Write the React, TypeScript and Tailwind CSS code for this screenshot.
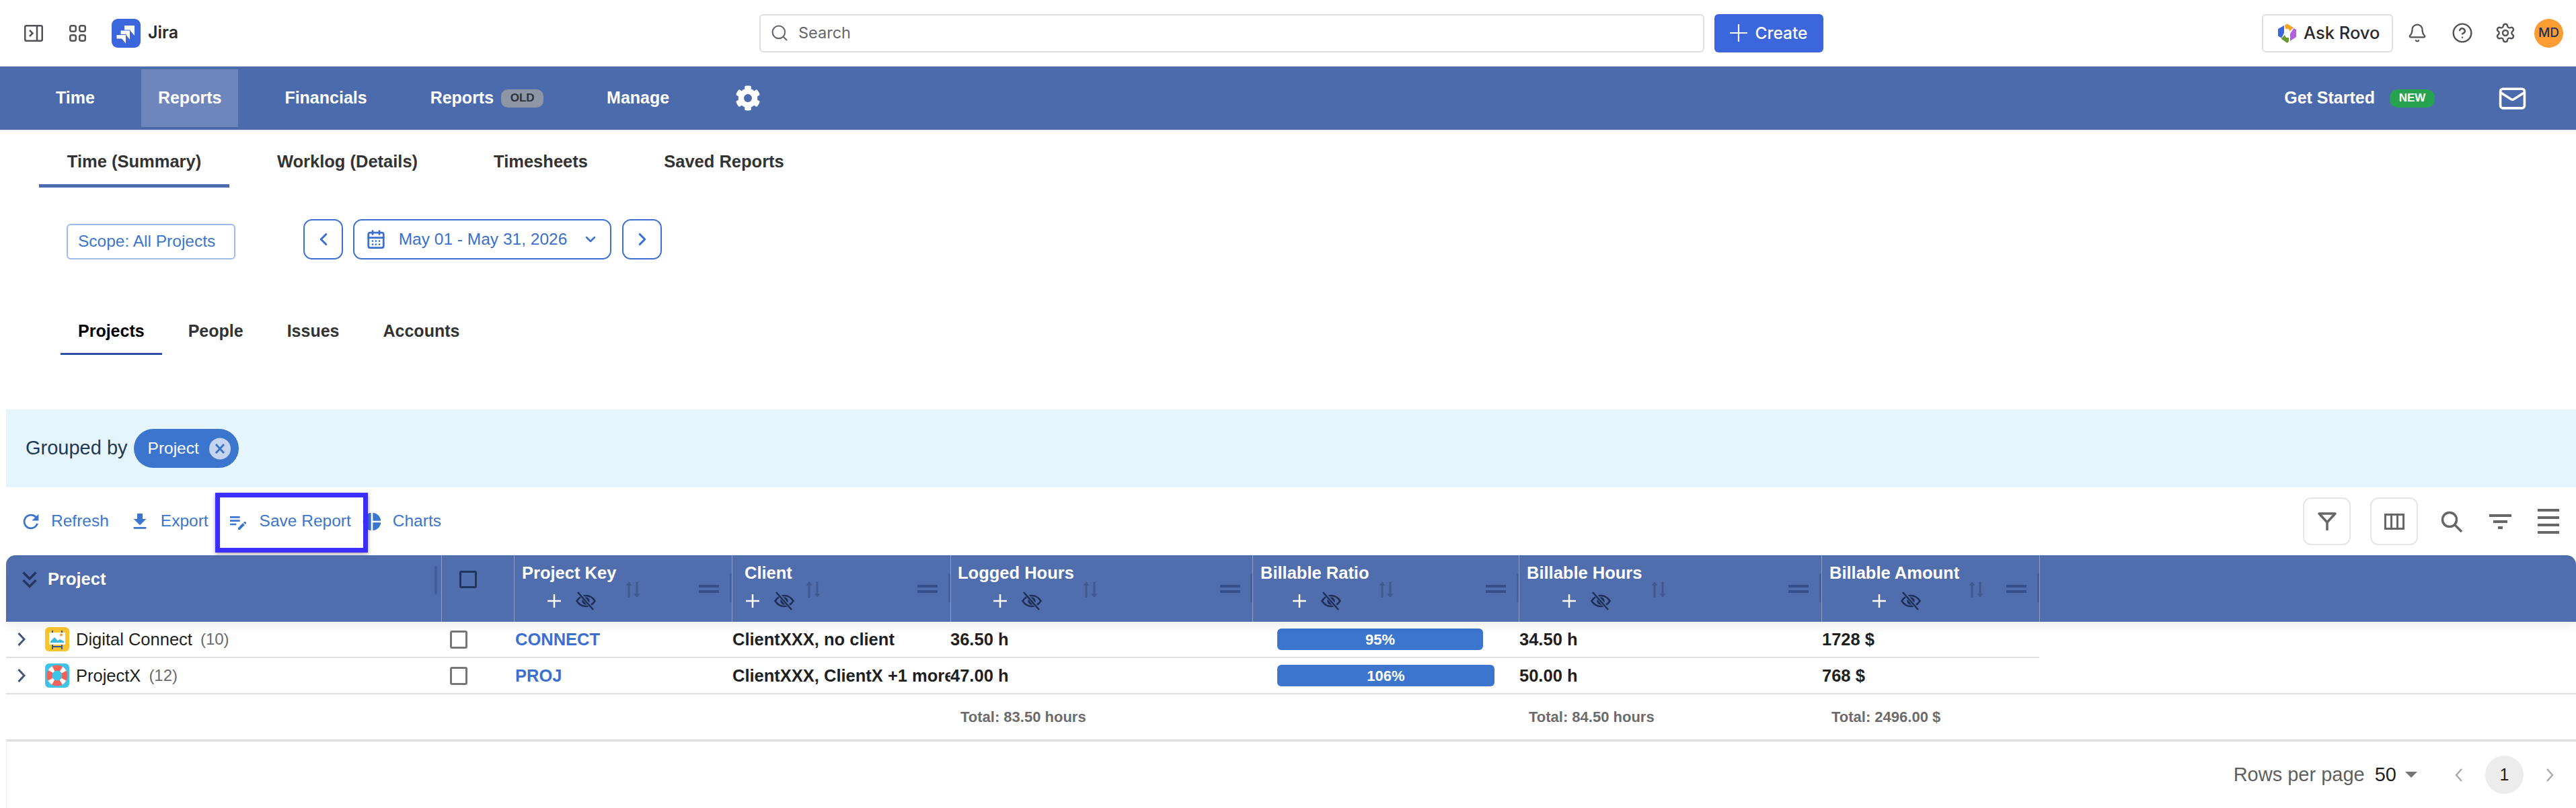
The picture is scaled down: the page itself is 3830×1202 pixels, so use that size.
import type { ReactNode } from "react";
import { Bell, CalendarDays, ChevronDown, ChevronLeft, ChevronRight, CircleHelp, Mail, Search, Settings } from "lucide-react";
import { FaCog } from "react-icons/fa";
import { MdEditNote, MdFileDownload, MdPieChart, MdRefresh } from "react-icons/md";

const navItems = ["Time", "Reports", "Financials"];
const subTabs = [
  { label: "Time (Summary)", width: "w-[283px]" },
  { label: "Worklog (Details)", width: "w-[293px]" },
  { label: "Timesheets", width: "w-[224px]" },
  { label: "Saved Reports", width: "w-[263px]" },
];
const viewTabs = ["Projects", "People", "Issues", "Accounts"];

const toolbarItems = [
  { label: "Refresh", icon: <MdRefresh size={34} />, cls: "gap-[13px]" },
  { label: "Export", icon: <MdFileDownload size={32} />, cls: "gap-[15px] ml-[30px]" },
  { label: "Save Report", icon: <MdEditNote size={32} />, cls: "gap-[16px] ml-[28px]" },
  { label: "Charts", icon: <MdPieChart size={32} />, cls: "gap-[15px] ml-[15px]" },
];

const columns = [
  { title: "Project Key", width: "w-[324px]", pad: "pl-[11px]", left: "w-[154px]", plus: "ml-[38px]", eq: "mr-[19px]" },
  { title: "Client", width: "w-[325px]", pad: "pl-[18px]", left: "w-[91px]", plus: "ml-[2px]", eq: "mr-[19px]" },
  { title: "Logged Hours", width: "w-[449px]", pad: "pl-[10px]", left: "w-[186px]", plus: "ml-[53px]", eq: "mr-[18px]" },
  { title: "Billable Ratio", width: "w-[396px]", pad: "pl-[11px]", left: "w-[176px]", plus: "ml-[48px]", eq: "mr-[19px]" },
  { title: "Billable Hours", width: "w-[450px]", pad: "pl-[11px]", left: "w-[185px]", plus: "ml-[53px]", eq: "mr-[19px]" },
  { title: "Billable Amount", width: "w-[324px]", pad: "pl-[11px]", left: "w-[207px]", plus: "ml-[64px]", eq: "mr-[19px]" },
];

const rows = [
  {
    name: "Digital Connect",
    count: "(10)",
    key: "CONNECT",
    client: "ClientXXX, no client",
    logged: "36.50 h",
    ratio: "95%",
    bar: "w-[306px]",
    hours: "34.50 h",
    amount: "1728 $",
    rowCls: "w-[3023px]",
    icon: <EaselIcon />,
  },
  {
    name: "ProjectX",
    count: "(12)",
    key: "PROJ",
    client: "ClientXXX, ClientX +1 more",
    logged: "47.00 h",
    ratio: "106%",
    bar: "w-[323px]",
    hours: "50.00 h",
    amount: "768 $",
    rowCls: "w-full",
    icon: <BuoyIcon />,
  },
];

function JiraLogo() {
  return (
    <svg width="43" height="43" viewBox="0 0 43 43">
      <rect width="43" height="43" rx="9" fill="#3b66dc" />
      <path d="M19 10h15v15l-6.500-7.500H19z" fill="#fff" />
      <path d="M13 17h14.500v15l-6.500-8h-8z" fill="#fff" stroke="#3b66dc" strokeWidth="1" />
      <path d="M7 23.500h14.500V38l-6.500-8H7z" fill="#fff" stroke="#3b66dc" strokeWidth="1" />
    </svg>
  );
}

function RovoLogo() {
  return (
    <svg width="27" height="29" viewBox="0 0 27 29">
      <path d="M10 2.500 13.500 .5 23 6l-5.500 5.500-2-3.500H11z" fill="#f6a623" />
      <path d="M9 3v11l-4 7.500-5-3V8z" fill="#3b66dc" />
      <path d="M23.500 7 27 9v11l-9 6V15z" fill="#b45fe0" />
      <path d="M4.500 22.500 10 17l2 4h4v5.500L13.500 29z" fill="#6a9a2e" />
    </svg>
  );
}

function EyeOff() {
  return (
    <svg width="30" height="28" viewBox="0 0 30 28" fill="none" stroke="#1f2f55" strokeWidth="2.500">
      <path d="M1.500 14C5 8.500 9.500 6 15 6s10 2.500 13.500 8C25 19.500 20.500 22 15 22S5 19.500 1.500 14z" />
      <circle cx="15" cy="14" r="4.500" fill="#1f2f55" />
      <path d="M4 1l22 26" stroke="#506eae" strokeWidth="5" />
      <path d="M3 1l23 26" />
    </svg>
  );
}

function EaselIcon() {
  return (
    <svg width="36" height="36" viewBox="0 0 36 36">
      <rect width="36" height="36" rx="6" fill="#fbc42c" />
      <path d="M11 5v5M25 5v5M11 24v9M25 24v9M11 29h14" stroke="#2d5a96" strokeWidth="2" />
      <rect x="6" y="8" width="24" height="18" fill="#fff" />
      <circle cx="24" cy="11.500" r="2" fill="#f5962a" />
      <path d="M8 21l6-6 5 5 3-2 6 3z" fill="#3db8d8" />
      <rect x="8" y="21" width="20" height="2" fill="#3db8d8" />
    </svg>
  );
}

function BuoyIcon() {
  return (
    <svg width="36" height="36" viewBox="0 0 36 36" fill="none">
      <rect width="36" height="36" rx="6" fill="#3dc4e8" />
      <circle cx="18" cy="18" r="11.500" stroke="#f2605a" strokeWidth="8" />
      <circle cx="18" cy="18" r="11.500" stroke="#ffffff" strokeWidth="8" strokeDasharray="6 12.060" strokeDashoffset="-6.030" />
    </svg>
  );
}

function PlusMark() {
  return (
    <svg width="20" height="20" viewBox="0 0 20 20" stroke="#fff" strokeWidth="2.500">
      <path d="M10 0v20M0 10h20" />
    </svg>
  );
}

function SortArrows() {
  return (
    <svg width="22" height="24" viewBox="0 0 22 24" fill="#41598f">
      <path d="M5 0 9.500 6H6.500v18h-3V6H.500z" />
      <path d="M15.500 0h3v18h3L17 24l-4.500-6h3z" />
    </svg>
  );
}

function DragLines() {
  return (
    <svg width="30" height="12" viewBox="0 0 30 12" fill="#344f8c">
      <rect width="30" height="4" />
      <rect y="8" width="30" height="4" />
    </svg>
  );
}

function RoundButton({ children, cls }: { children: ReactNode; cls: string }) {
  return (
    <button className={`flex h-[60px] items-center justify-center rounded-[13px] border-2 border-[#3b6fd0] text-[#3b6fd0] ${cls}`}>
      {children}
    </button>
  );
}

function HeaderCell({ col }: { col: (typeof columns)[number] }) {
  return (
    <div className={`relative flex h-full border-l border-[#8ba0cc] ${col.width} ${col.pad}`}>
      <div className={`shrink-0 pt-[11px] ${col.left}`}>
        <div className="whitespace-nowrap text-[25.500px] leading-[30px] font-bold text-white">{col.title}</div>
        <div className={`mt-[13px] flex items-center gap-[22px] ${col.plus}`}>
          <PlusMark />
          <EyeOff />
        </div>
      </div>
      <div className="mt-[39px]">
        <SortArrows />
      </div>
      <div className={`mt-[44px] ml-auto ${col.eq}`}>
        <DragLines />
      </div>
      <div className="absolute top-[27px] right-0 h-[43px] w-[3px] rounded-full bg-[#455f9c]" />
    </div>
  );
}

export default function App() {
  return (
    <div className="h-[1202px] w-[3830px] overflow-hidden bg-white font-['Liberation_Sans',Arial,sans-serif]">
      {/* Top bar */}
      <header className="flex h-[98px] items-center font-['Inter',sans-serif]">
        <div className="flex w-[1129px] shrink-0 items-center pl-[36px]">
          <svg width="28" height="25" viewBox="0 0 28 25" fill="none" stroke="#505258" strokeWidth="2.500">
            <rect x="1.250" y="1.250" width="25.500" height="22.500" rx="2" />
            <path d="M19 1v23M8 8l4.500 4.500L8 17" />
          </svg>
          <svg className="ml-[39px]" width="25" height="25" viewBox="0 0 25 25" fill="none" stroke="#505258" strokeWidth="2.500">
            <rect x="1.250" y="1.250" width="8.500" height="8.500" rx="2.500" />
            <rect x="15.250" y="1.250" width="8.500" height="8.500" rx="2.500" />
            <rect x="1.250" y="15.250" width="8.500" height="8.500" rx="2.500" />
            <rect x="15.250" y="15.250" width="8.500" height="8.500" rx="2.500" />
          </svg>
          <div className="ml-[38px]">
            <JiraLogo />
          </div>
          <span className="ml-[11px] text-[25px] font-semibold text-[#292a2e]">Jira</span>
        </div>
        <div className="flex h-[57px] w-[1405px] shrink-0 items-center rounded-[6px] border-2 border-[#dddee1] pl-[14px] text-[#63666c]">
          <Search size={28} strokeWidth={1.800} />
          <span className="ml-[14px] text-[23.500px]">Search</span>
        </div>
        <button className="ml-[15px] flex h-[57px] w-[162px] shrink-0 items-center justify-center gap-[11px] rounded-[6px] bg-[#3b66dc] text-[24.500px] font-medium text-white">
          <svg width="26" height="26" viewBox="0 0 26 26" stroke="#fff" strokeWidth="2.200">
            <path d="M13 0v26M0 13h26" />
          </svg>
          Create
        </button>
        <div className="ml-auto flex items-center pr-[19px]">
          <button className="flex h-[57px] w-[195px] items-center gap-[11px] rounded-[6px] border-2 border-[#dddee1] pl-[22px] text-[25.500px] font-medium text-[#292a2e]">
            <RovoLogo />
            Ask Rovo
          </button>
          <Bell className="ml-[21px] text-[#505258]" size={30} strokeWidth={1.800} />
          <CircleHelp className="ml-[36px] text-[#505258]" size={32} strokeWidth={1.800} />
          <Settings className="ml-[32px] text-[#505258]" size={32} strokeWidth={1.800} />
          <div className="ml-[27px] flex h-[43px] w-[43px] items-center justify-center rounded-full bg-[#fb9d33] text-[19px] font-medium text-[#1f2f55]">
            MD
          </div>
        </div>
      </header>

      {/* Main nav */}
      <nav className="flex h-[96px] items-center gap-[44px] border-y border-[#e4e4e4] bg-[#4c6bad] pl-[58px] text-[25px] font-bold text-white">
        {navItems.map((item) => (
          <div
            key={item}
            className={`flex h-[86px] items-center px-[25px] ${item === "Reports" ? "bg-[#6f86bd]" : ""}`}
          >
            {item}
          </div>
        ))}
        <div className="flex h-[86px] items-center px-[25px]">
          Reports
          <span className="ml-[11px] flex h-[27px] w-[63px] items-center justify-center rounded-[10px] bg-[#8e96a6] text-[17px] text-[#2a3140]">
            OLD
          </span>
        </div>
        <div className="flex h-[86px] items-center px-[25px]">Manage</div>
        <FaCog className="ml-[29px]" size={38} />
        <div className="ml-auto flex items-center pr-[73px]">
          <span>Get Started</span>
          <span className="ml-[22px] flex h-[27px] w-[67px] items-center justify-center rounded-[12px] bg-[#27a34f] text-[17px]">
            NEW
          </span>
          <Mail className="ml-[94px]" size={43} strokeWidth={2} />
        </div>
      </nav>

      {/* Report type tabs */}
      <div className="flex h-[85px] gap-[29px] pl-[58px] text-[25.500px] font-bold text-[#333333]">
        {subTabs.map((tab, i) => (
          <div
            key={tab.label}
            className={`flex items-center justify-center border-b-[5px] pt-[12px] ${tab.width} ${i === 0 ? "border-[#4c6bad]" : "border-transparent"}`}
          >
            {tab.label}
          </div>
        ))}
      </div>

      {/* Scope and date range */}
      <div className="mt-[47px] flex items-end pl-[99px] text-[24.500px] text-[#3b75ce]">
        <button className="flex h-[53px] w-[251px] items-center rounded-[6px] border-2 border-[#9dbce9] pl-[15px]">
          Scope: All Projects
        </button>
        <RoundButton cls="ml-[101px] w-[59px]">
          <ChevronLeft size={30} strokeWidth={2.500} />
        </RoundButton>
        <RoundButton cls="ml-[15px] w-[384px] gap-[19px]">
          <CalendarDays size={30} strokeWidth={2.200} />
          <span>May 01 - May 31, 2026</span>
          <ChevronDown className="ml-[4px]" size={24} strokeWidth={2.500} />
        </RoundButton>
        <RoundButton cls="ml-[16px] w-[59px]">
          <ChevronRight size={30} strokeWidth={2.500} />
        </RoundButton>
      </div>

      {/* View tabs */}
      <div className="mt-[74px] flex h-[68px] gap-[13px] pl-[90px] text-[25px] font-bold">
        {viewTabs.map((tab, i) => (
          <div
            key={tab}
            className={`flex items-center border-b-[3px] px-[26px] ${i === 0 ? "border-[#2e4fa3] text-black" : "border-transparent text-[#333333]"}`}
          >
            {tab}
          </div>
        ))}
      </div>

      {/* Grouping band */}
      <div className="mt-[81px] ml-[9px] flex h-[116px] items-center bg-[#e5f5fd] pl-[29px]">
        <span className="text-[29px] text-[#1e3a52]">Grouped by</span>
        <div className="ml-[9px] flex h-[58px] w-[156px] items-center rounded-full bg-[#3b75ce] pl-[21px] text-[24.500px] text-white">
          Project
          <svg className="ml-[15px]" width="32" height="33" viewBox="0 0 32 33" stroke="#3b75ce" strokeWidth="3">
            <circle cx="16" cy="16.500" r="16" fill="#c5d5ef" stroke="none" />
            <path d="M10 10l12 13M22 10L10 23" />
          </svg>
        </div>
      </div>

      {/* Toolbar */}
      <div className="relative flex h-[101px] items-center pr-[25px] pl-[29px]">
        {toolbarItems.map((item) => (
          <button key={item.label} className={`flex items-center text-[24.500px] text-[#3b75ce] ${item.cls}`}>
            {item.icon}
            {item.label}
          </button>
        ))}
        <div className="absolute top-[8px] left-[320px] h-[89px] w-[227px] border-[7px] border-[#3a2ffa] shadow-[0_2px_6px_rgba(0,0,0,0.35)]" />
        <button className="ml-auto flex h-[71px] w-[71px] items-center justify-center rounded-[12px] border-2 border-[#e6e6e6]">
          <svg width="28" height="28" viewBox="0 0 28 28" fill="none" stroke="#666666" strokeWidth="3.500" strokeLinejoin="round">
            <path d="M2 2h24L14 15zM14 14v13" />
          </svg>
        </button>
        <button className="ml-[29px] flex h-[71px] w-[71px] items-center justify-center rounded-[12px] border-2 border-[#e6e6e6]">
          <svg width="30" height="24" viewBox="0 0 30 24" fill="none" stroke="#666666" strokeWidth="3">
            <rect x="1.500" y="1.500" width="27" height="21" />
            <path d="M10.500 1v22M19.500 1v22" />
          </svg>
        </button>
        <svg className="ml-[34px]" width="32" height="32" viewBox="0 0 32 32" fill="none" stroke="#666666" strokeWidth="3.500">
          <circle cx="13" cy="13" r="10.500" />
          <path d="M20.500 20.500 31 31" />
        </svg>
        <svg className="ml-[40px]" width="33" height="22" viewBox="0 0 33 22" fill="#666666">
          <rect width="33" height="4" />
          <rect x="6" y="9" width="21" height="4" />
          <rect x="13" y="18" width="7" height="4" />
        </svg>
        <svg className="ml-[39px]" width="32" height="37" viewBox="0 0 32 37" fill="#666666">
          <rect width="32" height="4" />
          <rect y="11" width="32" height="4" />
          <rect y="22" width="32" height="4" />
          <rect y="33" width="32" height="4" />
        </svg>
      </div>

      {/* Table */}
      <div className="ml-[9px]">
        <div className="relative z-10 flex h-[99px] rounded-t-[14px] bg-[#506eae] shadow-[0_8px_14px_rgba(0,0,0,0.06)]">
          <div className="relative flex h-full w-[647px] items-start pt-[24px] pl-[24px]">
            <svg width="22" height="25" viewBox="0 0 22 25" fill="none" stroke="#24365f" strokeWidth="3.500">
              <path d="M1.500 1.500 11 11l9.500-9.500M1.500 13 11 22.500 20.500 13" />
            </svg>
            <span className="ml-[16px] text-[25.500px] leading-[22px] font-bold text-white">Project</span>
            <div className="absolute top-[15px] right-[6px] h-[43px] w-[4px] rounded-full bg-[#455f9c]" />
          </div>
          <div className="h-full w-[108px] border-l border-[#8ba0cc] pt-[23px] pl-[26px]">
            <div className="h-[26px] w-[26px] rounded-[3px] border-[3px] border-[#1f3560]" />
          </div>
          {columns.map((col) => (
            <HeaderCell key={col.title} col={col} />
          ))}
          <div className="h-full flex-1 border-l border-[#8ba0cc]" />
        </div>

        {rows.map((row) => (
          <div key={row.key} className={`flex h-[54px] items-center border-b-2 border-[#dfdfdf] text-[25.500px] ${row.rowCls}`}>
            <div className="flex w-[647px] shrink-0 items-center pl-[17px]">
              <svg width="12" height="22" viewBox="0 0 12 22" fill="none" stroke="#3f5478" strokeWidth="3">
                <path d="M1.500 2 10 11l-8.500 9" />
              </svg>
              <div className="ml-[29px] h-[36px] w-[36px]">{row.icon}</div>
              <span className="ml-[10px] text-[#1f1f1f]">{row.name}</span>
              <span className="ml-[12px] text-[24px] text-[#6b6b6b]">{row.count}</span>
            </div>
            <div className="w-[108px] shrink-0 pl-[13px]">
              <div className="h-[27px] w-[26px] rounded-[3px] border-[3px] border-[#777777]" />
            </div>
            <div className="w-[324px] shrink-0 pl-[2px] font-bold text-[#3b6fd0]">{row.key}</div>
            <div className="w-[325px] shrink-0 overflow-hidden pl-[1px] font-bold whitespace-nowrap text-[#1f1f1f]">{row.client}</div>
            <div className="w-[449px] shrink-0 font-bold text-[#1f1f1f]">{row.logged}</div>
            <div className="w-[396px] shrink-0 pl-[37px]">
              <div className={`flex h-[32px] items-center justify-center rounded-[6px] bg-[#3b75ce] text-[22px] font-bold text-white ${row.bar}`}>
                {row.ratio}
              </div>
            </div>
            <div className="w-[450px] shrink-0 pl-[1px] font-bold text-[#1f1f1f]">{row.hours}</div>
            <div className="w-[324px] shrink-0 pl-[1px] font-bold text-[#1f1f1f]">{row.amount}</div>
          </div>
        ))}

        <div className="flex h-[70px] items-center border-b-[3px] border-[#dddddd] pl-[1404px] text-[22px] font-bold text-[#6b6b6b]">
          <div className="w-[449px] pl-[15px]">Total: 83.50 hours</div>
          <div className="w-[396px]" />
          <div className="w-[450px] pl-[15px]">Total: 84.50 hours</div>
          <div className="w-[324px] pl-[15px]">Total: 2496.00 $</div>
        </div>

        {/* Pagination */}
        <div className="flex h-[99px] items-center justify-end border-l border-[#eeeeee] pr-[33px] text-[#5f5f5f]">
          <span className="text-[29px]">Rows per page</span>
          <span className="ml-[15px] text-[29px] text-[#1f1f1f]">50</span>
          <svg className="ml-[13px]" width="18" height="9" viewBox="0 0 18 9" fill="#757575">
            <path d="M0 0h18L9 9z" />
          </svg>
          <svg className="ml-[56px]" width="11" height="20" viewBox="0 0 11 20" fill="none" stroke="#aaaaaa" strokeWidth="2.500">
            <path d="M10 1 2 10l8 9" />
          </svg>
          <div className="ml-[34px] flex h-[57px] w-[57px] items-center justify-center rounded-full bg-[#ececec] text-[25px] text-[#1f1f1f]">
            1
          </div>
          <svg className="ml-[34px]" width="11" height="20" viewBox="0 0 11 20" fill="none" stroke="#aaaaaa" strokeWidth="2.500">
            <path d="m1 1 8 9-8 9" />
          </svg>
        </div>
      </div>
    </div>
  );
}
